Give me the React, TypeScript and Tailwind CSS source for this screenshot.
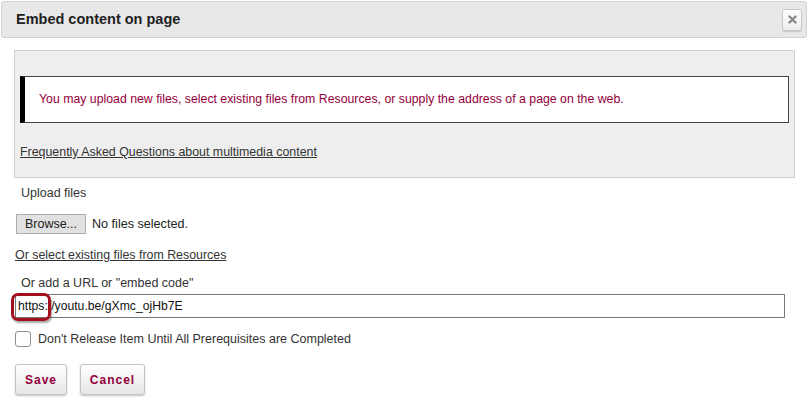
import React from 'react';

const App: React.FC = () => {
  return (
    <div className="w-[809px] h-[418px] bg-white overflow-hidden font-['Liberation_Sans',Arial,sans-serif] text-[#333]">
      {/* header */}
      <div className="mx-[1px] mt-[1px] w-[806px] h-[37px] flex items-center justify-between pl-[14px] pr-[4px] border border-[#d2d2d2] rounded-[3px] bg-[#e8e8e8]">
        <h1 className="text-[14.5px] font-bold text-[#222]">Embed content on page</h1>
        <button className="w-[20px] h-[22px] flex items-center justify-center border border-[#c8c8c8] rounded-[3px] bg-gradient-to-b from-white to-[#ececec] shadow-[0_1px_1px_rgba(0,0,0,0.15)]">
          <svg width="9" height="9" viewBox="0 0 9 9">
            <path d="M1.5 1.5 L7.5 7.5 M7.5 1.5 L1.5 7.5" stroke="#888" strokeWidth="2.4" strokeLinecap="round" />
          </svg>
        </button>
      </div>

      <div className="ml-[14px] mt-[12px] w-[781px] h-[128px] border border-[#d0d0d0] bg-[#eeeeee] pt-[25px] px-[5px]">
        <div className="h-[47px] bg-white border border-[#444] border-l-[5px] border-l-black flex items-center pl-[14px]">
          <p className="text-[12.3px] text-[#94003c]">
            You may upload new files, select existing files from Resources, or supply the address of a page on the web.
          </p>
        </div>
        <a className="block mt-[21px] text-[12.4px] leading-[16px] underline text-[#333]">
          Frequently Asked Questions about multimedia content
        </a>
      </div>

      <div className="pl-[15px]">
        <p className="mt-[7px] pl-[6px] text-[12.5px] leading-[16px] text-[#333]">Upload files</p>
        <div className="mt-[13px] flex items-center gap-[6px]">
          <button className="ml-[1px] w-[70px] h-[20px] border border-[#adadad] bg-[#e1e1e1] text-[12.5px] text-[#222] leading-[18px]">
            Browse...
          </button>
          <span className="text-[12.6px] text-[#222]">No files selected.</span>
        </div>
        <a className="block mt-[13px] text-[12.4px] leading-[16px] underline text-[#333]">
          Or select existing files from Resources
        </a>
        <p className="mt-[12px] pl-[6px] text-[12.5px] leading-[16px] text-[#333]">Or add a URL or "embed code"</p>
        <div className="relative mt-[3px] w-[770px]">
          <div className="h-[24px] border border-[#777] flex items-center pl-[2px] text-[12.2px] text-[#111]">
            https://youtu.be/gXmc_ojHb7E
          </div>
          <span className="absolute left-[-4px] top-[-1px] w-[40px] h-[28px] rounded-[7px] border-[3px] border-[#a3101c] shadow-[1px_2px_2px_rgba(0,0,0,0.35)]" />
        </div>
        <label className="mt-[13px] flex items-center gap-[7px]">
          <span className="w-[16px] h-[16px] rounded-[3px] border border-[#8f8f8f] bg-white" />
          <span className="text-[12.5px] leading-[16px] text-[#333]">Don't Release Item Until All Prerequisites are Completed</span>
        </label>
        <div className="mt-[17px] flex gap-[13px]">
          <button className="w-[52px] h-[31px] border border-[#c4c4c4] rounded-[3px] bg-gradient-to-b from-white to-[#e6e6e6] shadow-[0_1px_2px_rgba(0,0,0,0.25)] text-[12px] font-bold tracking-[1px] text-[#94003c]">
            Save
          </button>
          <button className="w-[65px] h-[31px] border border-[#c4c4c4] rounded-[3px] bg-gradient-to-b from-white to-[#e6e6e6] shadow-[0_1px_2px_rgba(0,0,0,0.25)] text-[12px] font-bold tracking-[1px] text-[#94003c]">
            Cancel
          </button>
        </div>
      </div>
    </div>
  );
};

export default App;
